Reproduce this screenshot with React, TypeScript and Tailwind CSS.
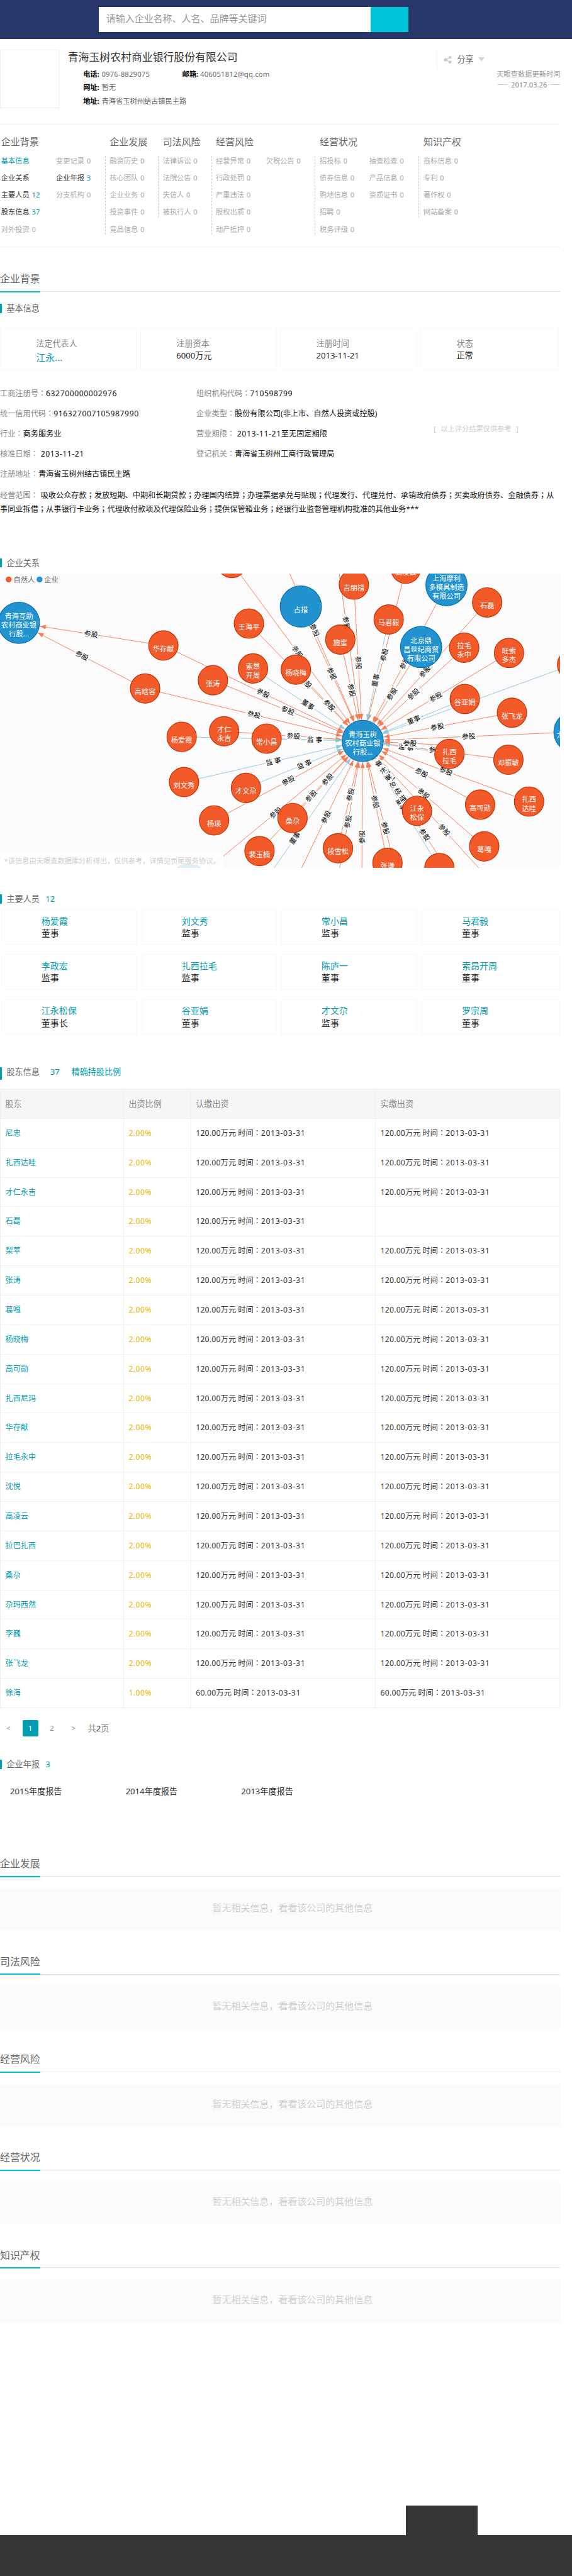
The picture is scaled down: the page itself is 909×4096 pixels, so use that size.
import React from "react";

/* Full-width colons and semicolons sit in the middle of their cell. */
function T({ children }: { children: string }) {
  return (
    <>
      {children.split(/([：；])/).map((part, i) =>
        part === "：" || part === "；" ? (
          <span key={i} className="font-['Noto_Sans','Noto_Sans_CJK_TC',sans-serif]" lang="zh-TW">
            {part}
          </span>
        ) : (
          part
        )
      )}
    </>
  );
}

type NavItem = [string, string?, ("link" | "on")?];
const nav: { title: string; w: string; h: string; cols: { w: string; items: NavItem[] }[] }[] = [
  {
    title: "企业背景", w: "w-[178px] pl-[2px]", h: "",
    cols: [
      { w: "w-[93px]", items: [["基本信息", "", "link"], ["企业关系", "", "on"], ["主要人员", "12", "on"], ["股东信息", "37", "on"], ["对外投资", "0"]] },
      { w: "", items: [["变更记录", "0"], ["企业年报", "3", "on"], ["分支机构", "0"]] },
    ],
  },
  { title: "企业发展", w: "w-[90px] pl-[8px]", h: "h-[133px]", cols: [{ w: "", items: [["融资历史", "0"], ["核心团队", "0"], ["企业业务", "0"], ["投资事件", "0"], ["竞品信息", "0"]] }] },
  { title: "司法风险", w: "w-[90px] pl-[8px]", h: "h-[104px]", cols: [{ w: "", items: [["法律诉讼", "0"], ["法院公告", "0"], ["失信人", "0"], ["被执行人", "0"]] }] },
  {
    title: "经营风险", w: "w-[176px] pl-[8px]", h: "h-[133px]",
    cols: [
      { w: "w-[85px]", items: [["经营异常", "0"], ["行政处罚", "0"], ["严重违法", "0"], ["股权出质", "0"], ["动产抵押", "0"]] },
      { w: "", items: [["欠税公告", "0"]] },
    ],
  },
  {
    title: "经营状况", w: "w-[176px] pl-[8px]", h: "h-[133px]",
    cols: [
      { w: "w-[84px]", items: [["招投标", "0"], ["债券信息", "0"], ["购地信息", "0"], ["招聘", "0"], ["税务评级", "0"]] },
      { w: "", items: [["抽查检查", "0"], ["产品信息", "0"], ["资质证书", "0"]] },
    ],
  },
  { title: "知识产权", w: "w-[200px] pl-[8px]", h: "h-[104px]", cols: [{ w: "", items: [["商标信息", "0"], ["专利", "0"], ["著作权", "0"], ["网站备案", "0"]] }] },
];

function Nav() {
  return (
    <nav className="flex h-[209px] w-[950px] border-y-2 border-[#eee]">
      {nav.map((g) => (
        <div key={g.title} className={"relative shrink-0 " + g.w}>
          {g.h && <div className={"absolute left-0 top-[54px] border-l border-dashed border-[#ccc] " + g.h} />}
          <div className="mt-[17px] h-[24px] text-[16px] leading-[24px] text-[#666]">{g.title}</div>
          <div className="mt-[6px] flex whitespace-nowrap text-[12px] leading-[29px]">
            {g.cols.map((c, i) => (
              <div key={i} className={c.w}>
                {c.items.map(([label, n, kind]) => (
                  <div key={label} className={kind === "link" ? "text-[#009db0]" : kind === "on" ? "text-[#333]" : "text-[#aaa]"}>
                    {label}
                    {n && <span className={kind ? "ml-[4px] text-[#009db0]" : "ml-[4px]"}>{n}</span>}
                  </div>
                ))}
              </div>
            ))}
          </div>
        </div>
      ))}
    </nav>
  );
}

function Section({ title }: { title: string }) {
  return (
    <div className="flex h-[36px] w-[950px] border-b-2 border-[#e2e2e2]">
      <h2 className="h-[37px] w-[68px] border-b-3 border-[#00c0d3] text-[17px] leading-[28px] text-[#666]">{title}</h2>
    </div>
  );
}

function Sub({ title, n, gap, extra, tall }: { title: string; n?: string; gap?: string; extra?: string; tall?: boolean }) {
  return (
    <div className={"flex border-l-4 border-[#009db0] pl-[8px] text-[14px] leading-[16px] text-[#666] " + (tall ? "h-[21px]" : "h-[16px]")}>
      <span>{title}</span>
      {n && <span className={"text-[#009db0] " + (gap ?? "ml-[10px]")}>{n}</span>}
      {extra && <span className="ml-[20px] text-[#009db0]">{extra}</span>}
    </div>
  );
}

/* ---------- relation graph ---------- */
type Node = { x: number; y: number; blue?: boolean; t: string[] };
const C = { x: 615, y: 284 };
const nodes: Node[] = [
  { x: 32, y: 83.7, blue: true, t: ["青海互助", "农村商业银", "行股..."] },
  { x: 393, y: -18, t: [] },
  { x: 422, y: 84.8, t: ["王海平"] },
  { x: 277, y: 122, t: ["华存献"] },
  { x: 429, y: 161, t: ["索昂", "开周"] },
  { x: 361, y: 181, t: ["张涛"] },
  { x: 246, y: 195, t: ["高晗容"] },
  { x: 501.7, y: 163, t: ["杨晓梅"] },
  { x: 308, y: 277, t: ["杨爱霞"] },
  { x: 380, y: 267.6, t: ["才仁", "永吉"] },
  { x: 452, y: 280, t: ["常小昌"] },
  { x: 312, y: 353.7, t: ["刘文秀"] },
  { x: 417, y: 363.7, t: ["才文尕"] },
  { x: 363, y: 418.8, t: ["杨瑛"] },
  { x: 496, y: 414.7, t: ["桑尕"] },
  { x: 440, y: 470.8, t: ["裴玉楠"] },
  { x: 320, y: 528, blue: true, t: [] },
  { x: 510, y: 55.9, blue: true, t: ["占措"] },
  { x: 600, y: 18.7, t: ["吉朋措"] },
  { x: 577, y: 112, t: ["施蜜"] },
  { x: 688, y: -8.2, t: ["高凌云"] },
  { x: 757, y: 19.7, blue: true, t: ["上海摩利", "多模具制造", "有限公司"] },
  { x: 826, y: 49, t: ["石磊"] },
  { x: 659, y: 77.9, t: ["马君毅"] },
  { x: 714, y: 124.7, blue: true, t: ["北京鼎", "昌世纪商贸", "有限公司"] },
  { x: 787, y: 125.8, t: ["拉毛", "永中"] },
  { x: 863, y: 134.7, t: ["旺索", "多杰"] },
  { x: 970, y: 154.7, t: [] },
  { x: 788, y: 212.9, t: ["谷亚娟"] },
  { x: 868, y: 236, t: ["张飞龙"] },
  { x: 974, y: 268.7, blue: true, t: ["龙光商业银"] },
  { x: 615, y: 284, blue: true, t: ["青海玉树", "农村商业银", "行股..."] },
  { x: 762, y: 305.9, t: ["扎西", "拉毛"] },
  { x: 862, y: 315.8, t: ["邓振敏"] },
  { x: 814, y: 392, t: ["高可勋"] },
  { x: 897, y: 386.8, t: ["扎西", "达哇"] },
  { x: 707, y: 402.6, t: ["江永", "松保"] },
  { x: 821, y: 462.9, t: ["葛嘎"] },
  { x: 573, y: 466, t: ["段雪松"] },
  { x: 657, y: 490.8, t: ["张谦"] },
  { x: 745, y: 499.7, t: ["罗宗周"] },
];

type Edge = [number, number, string?, ("o" | "b" | "g")?, number?, number?];
const edges: Edge[] = [
  [393, -18], [422, 84.8], [277, 122], [429, 161, "董事", "b"], [361, 181], [246, 195], [501.7, 163],
  [308, 277, "董事", "b"], [380, 267.6], [452, 280, "监 事", "b"], [312, 353.7, "监 事", "b"], [417, 363.7, "监 事", "b"],
  [363, 418.8], [320, 528], [440, 470.8], [496, 414.7], [385, 614, "董事", "b"], [491, 542], [565, 558], [573, 466],
  [613, 610], [657, 490.8], [691, 580], [745, 499.7, "董事", "b"], [825, 602], [707, 402.6, "法 人", "g"],
  [701, 408, "董 事 长 兼 总 经 理"], [891, 586], [821, 462.9], [814, 392], [897, 386.8], [862, 315.8],
  [762, 305.9, "监 事", "b"], [775, 292], [974, 268.7], [868, 236], [970, 154.7, "董事", "b"], [788, 212.9, "董事", "b"],
  [863, 134.7], [787, 125.8], [826, 49], [714, 124.7], [757, 19.7], [688, -8.2], [659, 77.9, "董事", "b"],
  [600, 18.7], [577, 112], [559, -116], [451, -92], [510, 55.9],
  [277, 122, "参股", "o", 32, 83.7], [246, 195, "参股", "o", 32, 83.7],
];
const tint = { o: "#f47b55", b: "#8cc8de", g: "#c5e1a5" };

function Graph() {
  const geo = edges.map(([x, y, label = "参股", k = "o", tx = C.x, ty = C.y]) => {
    const a = Math.atan2(ty - y, tx - x);
    let deg = (a * 180) / Math.PI;
    if (deg > 90) deg -= 180;
    if (deg <= -90) deg += 180;
    return { x, y, label, k, deg, ex: tx - Math.cos(a) * 36, ey: ty - Math.sin(a) * 36, mx: (x + tx) / 2, my: (y + ty) / 2, head: (a * 180) / Math.PI };
  });
  return (
    <svg width="950" height="500" viewBox="0 0 950 500" className="block overflow-hidden bg-[#fbfbfb] text-[12px]">
      {geo.map((e, i) => (
        <g key={i}>
          <line x1={e.x} y1={e.y} x2={e.ex} y2={e.ey} stroke={tint[e.k]} strokeWidth="1" />
          <path d="M0 0L-10 -3.6L-10 3.6Z" fill={tint[e.k]} transform={`translate(${e.ex} ${e.ey}) rotate(${e.head})`} />
        </g>
      ))}
      {geo.map((e, i) => (
        <text key={i} transform={`translate(${e.mx} ${e.my}) rotate(${e.deg})`} y="4" textAnchor="middle" fontSize="11.5" fill="#000" stroke="#fff" strokeWidth="4" paintOrder="stroke">
          {e.label}
        </text>
      ))}
      {nodes.map((n, i) => (
        <g key={i}>
          <circle cx={n.x} cy={n.y} r={n.blue ? 35 : 25} fill={n.blue ? "#2393cf" : "#f25a29"} stroke={n.blue ? "#0b71aa" : "#c43406"} strokeWidth="1.3" />
          {n.t.map((line, j) => (
            <text key={j} x={n.x} y={n.y + 10 + (j - (n.t.length - 1) / 2) * 15 - (n.t.length > 1 ? 1.5 : 0)} textAnchor="middle" fontSize="12" fill="#fff">
              {line}
            </text>
          ))}
        </g>
      ))}
      <rect x="0" y="473" width="379" height="27" fill="#fff" fillOpacity="0.85" />
      <text x="7" y="491.5" fontSize="12" fill="#ccc">*该信息由天眼查数据库分析得出，仅供参考，详情见页尾服务协议。</text>
      <circle cx="14.7" cy="10" r="5" fill="#f25a29" />
      <text x="23" y="15" fontSize="12" fill="#666">自然人</text>
      <circle cx="67" cy="10" r="5" fill="#2393cf" />
      <text x="75" y="15" fontSize="12" fill="#666">企业</text>
    </svg>
  );
}

const people = [
  ["杨爱霞", "董事"], ["刘文秀", "监事"], ["常小昌", "监事"], ["马君毅", "董事"],
  ["李政宏", "监事"], ["扎西拉毛", "监事"], ["陈庐一", "董事"], ["索昂开周", "董事"],
  ["江永松保", "董事长"], ["谷亚娟", "董事"], ["才文尕", "监事"], ["罗宗周", "董事"],
];
const holders = ["尼忠", "扎西达哇", "才仁永吉", "石磊", "梨苹", "张涛", "葛嘎", "杨晓梅", "高可勋", "扎西尼玛", "华存献", "拉毛永中", "沈悦", "高凌云", "拉巴扎西", "桑尕", "尕玛西然", "李巍", "张飞龙", "徐海"];

function Amount({ v }: { v: string }) {
  return (
    <>
      <span className="tracking-[0.25px]">{v}</span>万元 <T>时间：</T>
      <span className="tracking-[0.75px]">2013-03-31</span>
    </>
  );
}

function Info({ k, v, num, sp }: { k: string; v: string; num?: boolean; sp?: boolean }) {
  return (
    <div className="h-[34px] whitespace-nowrap">
      <span className="text-[#888]"><T>{k + "："}</T></span>
      <span className={(num ? "tracking-[0.6px] " : "") + (sp ? "ml-[4px]" : "")}>{v}</span>
    </div>
  );
}

const cell = "border-r border-[#efefef] pl-[8px]";
const grid = "grid grid-cols-[209px_114px_313px_313px] border-b border-l border-[#efefef]";

export default function App() {
  return (
    <div className="relative h-[4370px] w-[970px] overflow-hidden bg-white font-['Noto_Sans','Noto_Sans_CJK_SC',sans-serif] [zoom:0.9373]" lang="zh-CN">
      <header className="flex h-[66px] bg-[#29366a] pl-[168px] pt-[12px]">
        <div className="h-[42px] w-[460px] bg-white pl-[12px] text-[16px] leading-[39px] text-[#999]">请输入企业名称、人名、品牌等关键词</div>
        <div className="h-[42px] w-[64px] bg-[#00c4d7]" />
      </header>

      <section className="flex h-[144px] w-[950px] pt-[18px]">
        <div className="h-[100px] w-[100px] border border-[#eee]" />
        <div className="w-[640px] pl-[15px] text-[12px] text-[#666]">
          <h1 className="h-[28px] text-[18px] leading-[25px] text-[#333]">青海玉树农村商业银行股份有限公司</h1>
          <div className="flex h-[28px] pl-[26px] leading-[27px]">
            <div className="w-[168px]"><b className="mr-[4px] text-black">电话:</b><span className="tracking-[0.2px]">0976-8829075</span></div>
            <div><b className="mr-[3px] text-black">邮箱:</b><span className="tracking-[0.2px]">406051812@qq.com</span></div>
          </div>
          <div className="h-[22px] pl-[26px] leading-[16px]"><b className="mr-[4px] text-black">网址:</b>暂无</div>
          <div className="h-[20px] pl-[26px] leading-[20px]"><b className="mr-[4px] text-black">地址:</b>青海省玉树州结古镇民主路</div>
        </div>
        <div className="w-[210px]">
          <div className="flex h-[33px] items-center border-l border-[#eee] pl-[11px]">
            <svg width="14" height="13" viewBox="0 0 14 13" className="mt-[2px]">
              <path d="M3.5 6.5L10.5 2.5M3.5 6.5L10.5 10.5" stroke="#ccc" strokeWidth="1.5" />
              <circle cx="3.2" cy="6.5" r="2.8" fill="#ccc" />
              <circle cx="11" cy="2.6" r="2.6" fill="#ccc" />
              <circle cx="11" cy="10.4" r="2.6" fill="#ccc" />
            </svg>
            <span className="ml-[9px] mt-[2px] text-[14px] text-[#666]">分享</span>
            <svg width="11" height="7" viewBox="0 0 11 7" className="ml-[8px]"><path d="M0 0H11L5.5 7Z" fill="#d2d2d2" /></svg>
          </div>
          <div className="text-right text-[12px] leading-[18px] text-[#999]">天眼查数据更新时间</div>
          <div className="flex items-center justify-end text-[12px] leading-[16px] text-[#888]">
            <div className="h-px w-[17px] bg-[#ccc]" />
            <span className="w-[72px] text-center">2017.03.26</span>
            <div className="h-px w-[17px] bg-[#ccc]" />
          </div>
        </div>
      </section>

      <Nav />
      <div className="h-[40px]" />
      <Section title="企业背景" />
      <div className="h-[20px]" />
      <Sub title="基本信息" />

      <div className="mt-[25px] grid h-[71px] w-[947px] grid-cols-[232px_231px_232px_234px] gap-x-[6px]">
        {[["法定代表人", "江永..."], ["注册资本", "6000万元"], ["注册时间", "2013-11-21"], ["状态", "正常"]].map(([k, v], i) => (
          <div key={k} className="border-x border-y-2 border-[#f8f8f8] pl-[60px] pt-[16px] text-[14px]">
            <div className="h-[20px] leading-[20px] text-[#888]">{k}</div>
            <div className={i === 0 ? "text-[16px] leading-[26px] text-[#009db0]" : "leading-[20px] text-[#222]"}>{v}</div>
          </div>
        ))}
      </div>

      <div className="mt-[24px] flex h-[170px] text-[13px] leading-[34px] text-[#111]">
        <div className="w-[333px]">
          <Info k="工商注册号" v="632700000002976" num />
          <Info k="统一信用代码" v="916327007105987990" num />
          <Info k="行业" v="商务服务业" />
          <Info k="核准日期" v="2013-11-21" num sp />
          <Info k="注册地址" v="青海省玉树州结古镇民主路" />
        </div>
        <div className="w-[402px]">
          <Info k="组织机构代码" v="710598799" num />
          <Info k="企业类型" v="股份有限公司(非上市、自然人投资或控股)" />
          <div className="h-[34px] whitespace-nowrap">
            <span className="text-[#888]"><T>营业期限：</T></span>
            <span className="ml-[4px] tracking-[0.7px]">2013-11-21</span>至无固定期限
          </div>
          <Info k="登记机关" v="青海省玉树州工商行政管理局" />
        </div>
        <div className="flex h-[153px] w-[144px] items-center justify-between whitespace-pre text-[12px] text-[#ccc]"><span>[</span><span>以上评分结果仅供参考</span><span>]</span></div>
      </div>
      <div className="mt-[8px] whitespace-nowrap text-[13px] leading-[24px] text-[#111]">
        <div className="h-[24px]"><span className="mr-[4px] text-[#888]"><T>经营范围：</T></span><T>吸收公众存款；发放短期、中期和长期贷款；办理国内结算；办理票据承兑与贴现；代理发行、代理兑付、承销政府债券；买卖政府债券、金融债券；从</T></div>
        <div className="h-[24px]"><T>事同业拆借；从事银行卡业务；代理收付款项及代理保险业务；提供保管箱业务；经银行业监督管理机构批准的其他业务***</T></div>
      </div>

      <div className="h-[70px]" />
      <Sub title="企业关系" />
      <div className="mt-[10px]"><Graph /></div>

      <div className="h-[44px]" />
      <Sub title="主要人员" n="12" />
      <div className="mt-[10px] grid w-[949px] grid-cols-[230px_229px_230px_234px] gap-x-[8px] gap-y-[16px] pl-[2px]">
        {people.map(([n, r]) => (
          <div key={n} className="h-[60px] border-x border-y-2 border-[#f8f8f8] pl-[67px] pt-[8px] text-[15px] leading-[21px]">
            <div className="text-[#009db0]">{n}</div>
            <div className="text-[#222]">{r}</div>
          </div>
        ))}
      </div>

      <div className="h-[56px]" />
      <Sub title="股东信息" n="37" gap="ml-[18px]" extra="精确持股比例" tall />

      <div className="mt-[15px] w-[950px] border-t border-[#efefef]">
        <div className={grid + " h-[50px] bg-[#f6f6f6] text-[14px] leading-[50px] text-[#888]"}>
          {["股东", "出资比例", "认缴出资", "实缴出资"].map((h) => <div key={h} className={cell}>{h}</div>)}
        </div>
        {holders.map((h, i) => (
          <div key={h} className={grid + " h-[50px] text-[13px] leading-[49px] text-[#333]"}>
            <div className={cell + " text-[#009db0]"}>{h}</div>
            <div className={cell + " tracking-[0.5px] text-[#ebb600]"}>{i === 19 ? "1.00%" : "2.00%"}</div>
            <div className={cell}><Amount v={i === 19 ? "60.00" : "120.00"} /></div>
            <div className={cell}>{i !== 3 && <Amount v={i === 19 ? "60.00" : "120.00"} />}</div>
          </div>
        ))}
      </div>

      <div className="mt-[20px] flex h-[28px] text-[12px] leading-[28px] text-[#888]">
        <span className="w-[38px] pl-[11px]">&lt;</span>
        <span className="w-[27px] rounded-[2px] bg-[#009db0] text-center text-white">1</span>
        <span className="w-[46px] text-center">2</span>
        <span className="w-[38px] pl-[10px]">&gt;</span>
        <span className="text-[14px]">共<span className="text-[#333]">2</span>页</span>
      </div>
      <div className="h-[40px]" />
      <Sub title="企业年报" n="3" />
      <div className="mt-[26px] flex h-[24px] pl-[17px] text-[14px] leading-[23px] text-[#333]">
        {["2015", "2014", "2013"].map((y) => <div key={y} className="w-[196px]">{y}年度报告</div>)}
      </div>
      <div className="h-[96px]" />
      {["企业发展", "司法风险", "经营风险", "经营状况", "知识产权"].map((s) => (
        <div key={s} className="h-[166px]">
          <Section title={s} />
          <div className="mt-[20px] h-[72px] w-[950px] bg-[#fbfbfb] pl-[360px] pt-[20px] text-[16px] leading-[26px] text-[#d0d0d0]">暂无相关信息，看看该公司的其他信息</div>
        </div>
      ))}
      <footer className="mt-[273px]">
        <div className="ml-[688px] h-[50px] w-[122px] bg-[#353635]" />
        <div className="h-[100px] bg-[#353635]" />
      </footer>
    </div>
  );
}
